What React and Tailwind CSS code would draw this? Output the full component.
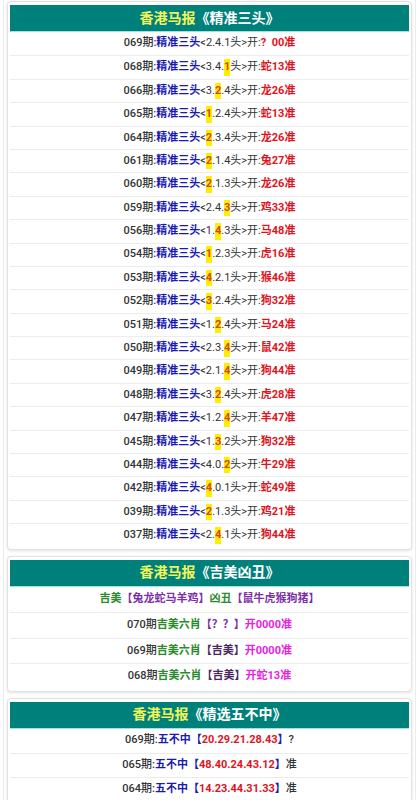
import React from "react";

const font = { fontFamily: 'Roboto, "Noto Sans CJK SC", sans-serif' };

const heads = [
  ["069", ["2", "4", "1"], -1, "?  00"],
  ["068", ["3", "4", "1"], 2, "蛇13"],
  ["066", ["3", "2", "4"], 1, "龙26"],
  ["065", ["1", "2", "4"], 0, "蛇13"],
  ["064", ["2", "3", "4"], 0, "龙26"],
  ["061", ["2", "1", "4"], 0, "兔27"],
  ["060", ["2", "1", "3"], 0, "龙26"],
  ["059", ["2", "4", "3"], 2, "鸡33"],
  ["056", ["1", "4", "3"], 1, "马48"],
  ["054", ["1", "2", "3"], 0, "虎16"],
  ["053", ["4", "2", "1"], 0, "猴46"],
  ["052", ["3", "2", "4"], 0, "狗32"],
  ["051", ["1", "2", "4"], 1, "马24"],
  ["050", ["2", "3", "4"], 2, "鼠42"],
  ["049", ["2", "1", "4"], 2, "狗44"],
  ["048", ["3", "2", "4"], 1, "虎28"],
  ["047", ["1", "2", "4"], 2, "羊47"],
  ["045", ["1", "3", "2"], 1, "狗32"],
  ["044", ["4", "0", "2"], 2, "牛29"],
  ["042", ["4", "0", "1"], 0, "蛇49"],
  ["039", ["2", "1", "3"], 0, "鸡21"],
  ["037", ["2", "4", "1"], 1, "狗44"],
];

function Header({ title }) {
  return (
    <div className="h-[27px] bg-[#00807a] border-b border-[#9fe3dc] flex items-center justify-center text-[14px] font-bold">
      <span className="text-[#f2f55a]">香港马报</span>
      <span className="text-white">《{title}》</span>
    </div>
  );
}

function Card({ title, children }) {
  return (
    <div className="border border-[#e2e2e2] rounded-[4px] bg-white p-[2px] pt-[3px] shadow-[0_1px_3px_rgba(0,0,0,0.12)]">
      <Header title={title} />
      {children}
    </div>
  );
}

function HeadRow({ r, first }) {
  const [p, d, hi, res] = r;
  return (
    <div className={"h-[23.4px] flex items-center justify-center text-[11px] text-[#333] whitespace-pre " + (first ? "" : "border-t border-[#ececec]")}>
      <span className="font-medium">{p}期:</span>
      <span className="font-bold text-[#1a1ab0]">精准三头</span>
      <span>&lt;</span>
      {d.map((x, i) => (
        <React.Fragment key={i}>
          {i > 0 && <span>.</span>}
          {i === hi ? (
            <span className="bg-[#ffee00] text-[#d9460f] font-bold">{x}</span>
          ) : (
            <span>{x}</span>
          )}
        </React.Fragment>
      ))}
      <span>头&gt;开:</span>
      <span className="font-bold text-[#e0141e]">{res}准</span>
    </div>
  );
}

function Row({ children, h = "h-[25.5px]" }) {
  return (
    <div className={h + " flex items-center justify-center text-[11px] text-[#333] border-t border-[#ececec] whitespace-pre"}>
      {children}
    </div>
  );
}

export default function App() {
  return (
    <div style={font} className="bg-white min-h-[800px]">
      <div className="mx-[3px] border-x border-[#ececec] px-[3px] pt-[1px] flex flex-col gap-[6px] pb-4">
        <Card title="精准三头">
          {heads.map((r, i) => (
            <HeadRow key={r[0]} r={r} first={i === 0} />
          ))}
        </Card>

        <Card title="吉美凶丑">
          <div className="h-[25.5px] flex items-center justify-center text-[11px] font-bold">
            <span className="text-[#2b8a2b]">吉美</span>
            <span className="text-[#7b2fa8]">【兔龙蛇马羊鸡】</span>
            <span className="text-[#2b8a2b]">凶丑</span>
            <span className="text-[#7b2fa8]">【鼠牛虎猴狗猪】</span>
          </div>
          <Row>
            <span className="font-medium">070期</span>
            <span className="text-[#2b8a2b] font-bold">吉美六肖</span>
            <span className="text-[#7b2fa8] font-bold">【？？】</span>
            <span className="text-[#e523e0] font-bold">开0000准</span>
          </Row>
          <Row>
            <span className="font-medium">069期</span>
            <span className="text-[#2b8a2b] font-bold">吉美六肖</span>
            <span className="text-[#4a2a5e] font-bold">【吉美】</span>
            <span className="text-[#e523e0] font-bold">开0000准</span>
          </Row>
          <Row>
            <span className="font-medium">068期</span>
            <span className="text-[#2b8a2b] font-bold">吉美六肖</span>
            <span className="text-[#4a2a5e] font-bold">【吉美】</span>
            <span className="text-[#e523e0] font-bold">开蛇13准</span>
          </Row>
        </Card>

        <Card title="精选五不中">
          {[
            ["069", "20.29.21.28.43", "?"],
            ["065", "48.40.24.43.12", "准"],
            ["064", "14.23.44.31.33", "准"],
          ].map(([p, n, s], i) => (
            <div key={p} className={"h-[24px] flex items-center justify-center text-[11px] text-[#333] whitespace-pre " + (i === 0 ? "" : "border-t border-[#ececec]")}>
              <span className="font-medium">{p}期:</span>
              <span className="text-[#1a1ab0] font-bold">五不中【</span>
              <span className="text-[#e0141e] font-bold">{n}</span>
              <span className="text-[#1a1ab0] font-bold">】</span>
              <span className="font-medium">{s}</span>
            </div>
          ))}
        </Card>
      </div>
    </div>
  );
}
